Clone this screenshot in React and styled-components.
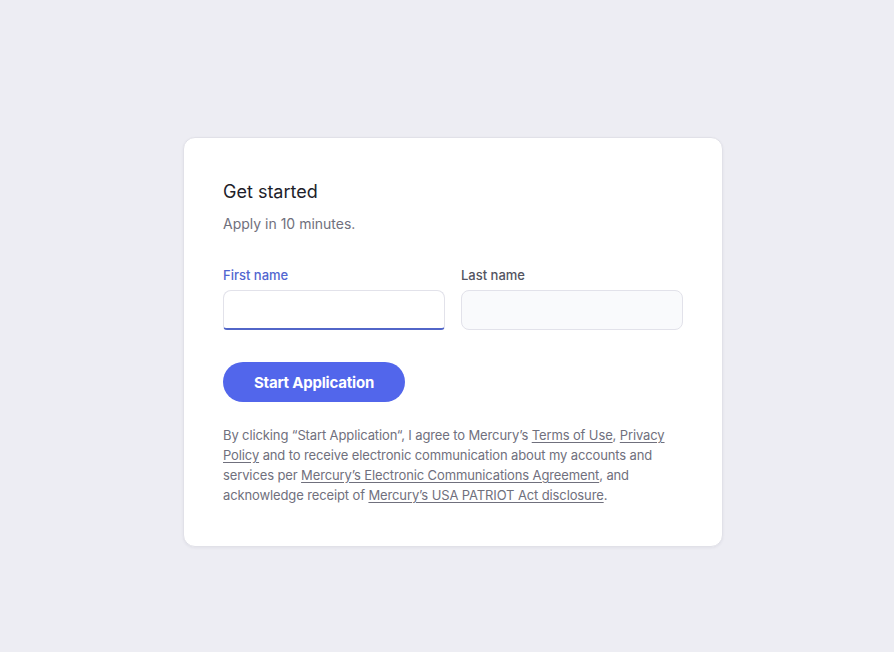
import React from "react";
import styled, { createGlobalStyle } from "styled-components";

const Global = createGlobalStyle`
  html, body { margin: 0; padding: 0; }
  body {
    background: #EDEDF3;
    font-family: Inter, "Noto Sans", sans-serif;
    -webkit-font-smoothing: antialiased;
  }
`;

const Page = styled.div`
  min-height: 652px;
  display: flex;
  justify-content: center;
  align-items: flex-start;
  padding: 137px 0 0 12px;
  box-sizing: border-box;
`;

const Card = styled.div`
  width: 540px;
  box-sizing: border-box;
  background: #fff;
  border: 1px solid #E1E1E8;
  border-radius: 12px;
  box-shadow: 0 1px 3px rgba(30, 30, 60, 0.06);
  padding: 42px 39px 41px;
  display: flex;
  flex-direction: column;
`;

const Title = styled.h1`
  margin: 0;
  font-size: 18px;
  line-height: 24px;
  font-weight: 400;
  color: #1E1E2A;
`;

const Subtitle = styled.p`
  margin: 10px 0 0;
  font-size: 14px;
  line-height: 20px;
  color: #70707D;
`;

const Fields = styled.div`
  margin-top: 31px;
  display: grid;
  grid-template-columns: 1fr 1fr;
  gap: 16px;
`;

const Field = styled.label`
  display: flex;
  flex-direction: column;
  gap: 5px;
`;

const Label = styled.span`
  font-size: 13px;
  line-height: 20px;
  font-weight: 500;
  color: ${(p) => (p.$active ? "#5266D0" : "#535461")};
`;

const Input = styled.div`
  height: 40px;
  box-sizing: border-box;
  border-radius: 8px;
  border: 1px solid #E2E2EA;
  background: ${(p) => (p.$active ? "#fff" : "#F9FAFC")};
  ${(p) =>
    p.$active &&
    `border-bottom: 2px solid #5266C8; border-bottom-left-radius: 4px; border-bottom-right-radius: 4px;`}
`;

const Button = styled.button`
  margin-top: 32px;
  align-self: flex-start;
  width: 182px;
  height: 40px;
  border: none;
  border-radius: 20px;
  background: #5266EB;
  color: #fff;
  font-family: Inter, "Noto Sans", sans-serif;
  font-size: 15px;
  font-weight: 700;
  letter-spacing: -0.2px;
  cursor: pointer;
`;

const Legal = styled.p`
  margin: 23px 0 0;
  font-size: 13px;
  line-height: 20px;
  letter-spacing: -0.12px;
  color: #70707D;
`;

const Link = styled.a`
  color: #70707D;
  text-decoration: underline;
  text-underline-offset: 2px;
`;

export default function App() {
  return (
    <>
      <Global />
      <Page>
        <Card>
          <Title>Get started</Title>
          <Subtitle>Apply in 10 minutes.</Subtitle>
          <Fields>
            <Field>
              <Label $active>First name</Label>
              <Input $active />
            </Field>
            <Field>
              <Label>Last name</Label>
              <Input />
            </Field>
          </Fields>
          <Button>Start Application</Button>
          <Legal>
            By clicking “Start Application“, I agree to Mercury’s <Link>Terms of Use</Link>,{" "}
            <Link>Privacy Policy</Link> and to receive electronic communication about my
            accounts and services per{" "}
            <Link>Mercury’s Electronic Communications Agreement</Link>, and acknowledge receipt
            of <Link>Mercury’s USA PATRIOT Act disclosure</Link>.
          </Legal>
        </Card>
      </Page>
    </>
  );
}
